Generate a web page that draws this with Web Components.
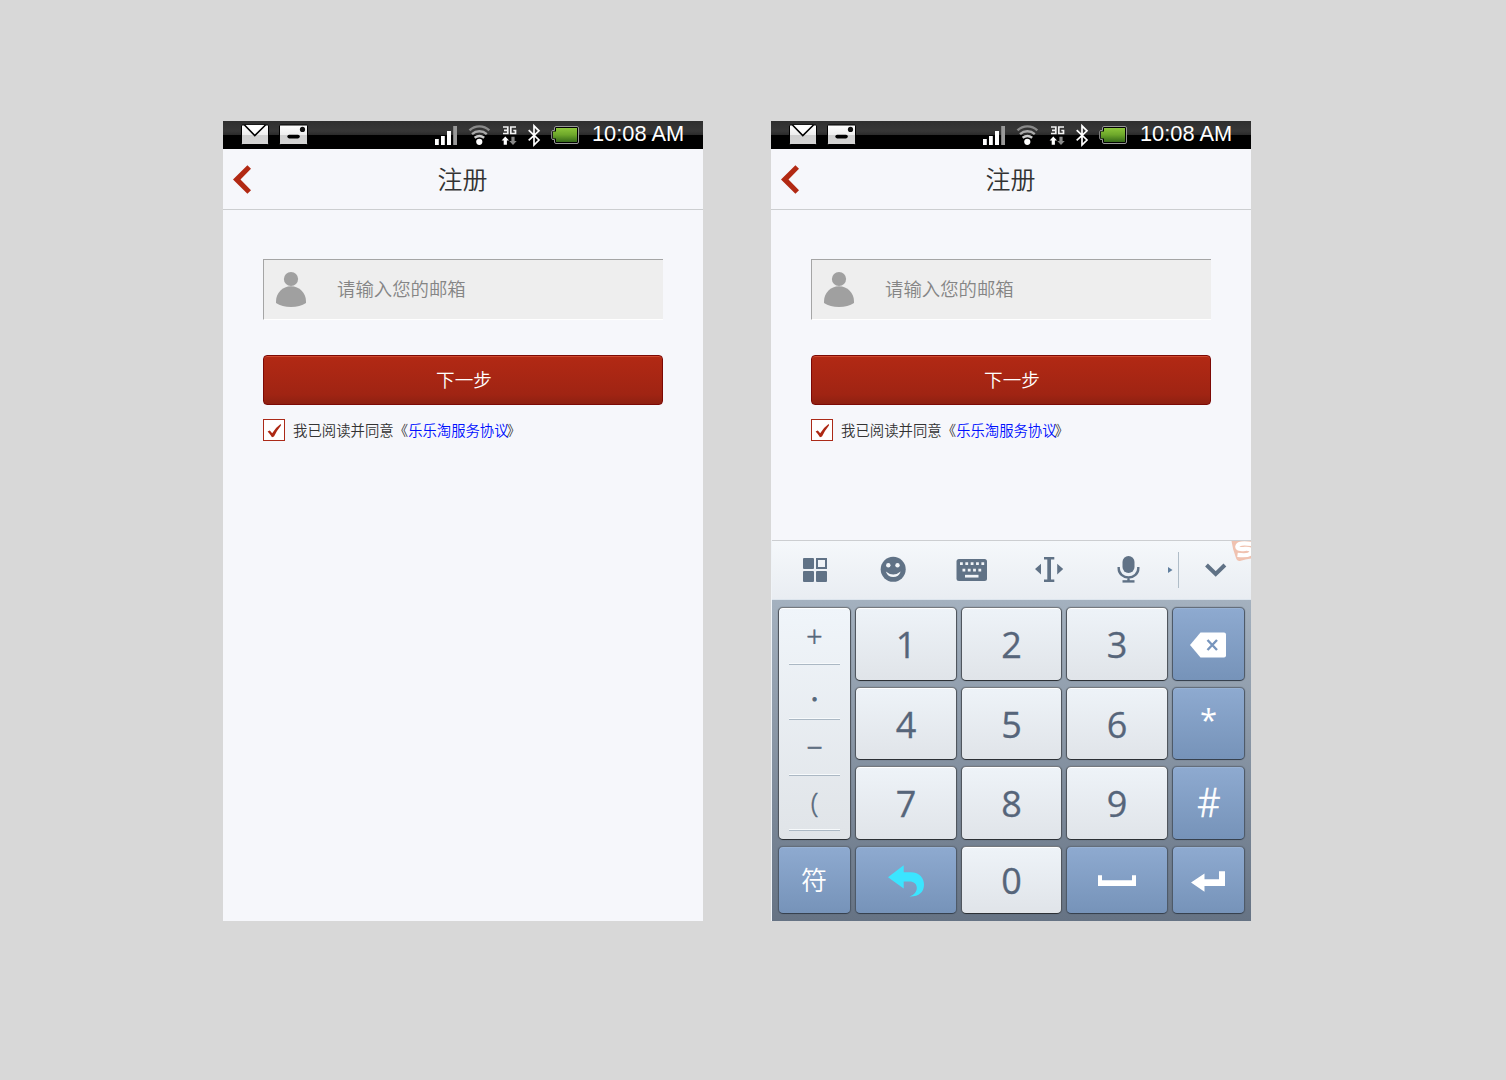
<!DOCTYPE html>
<html lang="zh-CN">
<head>
<meta charset="utf-8">
<title>注册</title>
<style>
html,body{margin:0;height:100%;background:#d8d8d8}
body{font-family:"Liberation Sans","Noto Sans CJK SC",sans-serif;overflow:hidden}
main{display:flex;gap:68px;padding:121px 0 0 223px}
</style>
</head>
<body>
<main>
<phone-screen><register-form></register-form></phone-screen>
<phone-screen><register-form></register-form><soft-keyboard slot="keyboard"></soft-keyboard></phone-screen>
</main>
<script>
const define = (name, html) => customElements.define(name, class extends HTMLElement {
  constructor(){ super(); this.attachShadow({mode:'open'}).innerHTML = html; }
});

define('status-bar', `<style>
:host{display:flex;height:28px;background:linear-gradient(#2f2f2f 0,#373737 10px,#2a2a2a 14px,#000 14px);color:#fff}
svg{display:block;flex:none}
.time{font:21.8px/26px "Liberation Sans",sans-serif;margin-left:6px;white-space:nowrap}
</style>
<svg width="207" height="28" viewBox="0 0 207 28">
<defs><linearGradient id="p" x2="0" y2="1"><stop stop-color="#fff"/><stop offset=".5" stop-color="#eee"/><stop offset=".52" stop-color="#d0d0d0"/><stop offset="1" stop-color="#d4d4d4"/></linearGradient></defs>
<rect x="18.5" y="4" width="27" height="19.5" rx="1" fill="url(#p)" stroke="#000"/><path d="M21.5 4 31.8 14.5 42.5 4" fill="#fff" stroke="#000" stroke-width="1.6"/>
<rect x="56.5" y="4" width="28" height="19.5" rx="1" fill="url(#p)" stroke="#000"/><circle cx="79.5" cy="8.4" r="2.6" fill="#111"/><rect x="64.3" y="13.8" width="12.5" height="3.6" rx="1.8"/>
</svg>
<svg width="156" height="28" viewBox="0 0 156 28">
<defs><linearGradient id="b" x2="0" y2="1"><stop stop-color="#8cc63a"/><stop offset=".48" stop-color="#6ea82b"/><stop offset="1" stop-color="#356a18"/></linearGradient></defs>
<g fill="#fff"><path d="M5 18h3.8v6H5zM11 15h3.8v9H11zM17 10h4v14H17z"/><path d="M23.2 5H27v19h-3.8z" fill="#999"/></g>
<g fill="none" stroke-width="2.4"><path d="M39.5 9.4a14.2 14.2 0 0 1 19.8 0" stroke="#8a8a8a"/><path d="M42 13.1a11.2 11.2 0 0 1 14.8 0" stroke="#aaa"/><path d="M44.6 16.8a8 8 0 0 1 9.6 0" stroke="#ccc"/></g><circle cx="49.3" cy="20.8" r="3.1" fill="#fff"/>
<g fill="none" stroke="#f2f2f2" stroke-width="1.7"><path d="M73 6h4.8v6.5H73M74 9.3h3.8M86 6h-5.2v6.5h4.7V9.5h-2.2"/></g>
<path d="M75.3 15.500l3.700 4h-2.100v4.300h-3.200v-4.300h-2.100z" fill="#fff"/><path d="M83 23.900l3.700-4h-2.100v-4.200h-3.200v4.200h-2.100z" fill="#888"/>
<path d="M98.700 9.200 109 19l-5 5V4.800l5 5-10.300 9.600" fill="none" stroke="#fff" stroke-width="1.700"/>
<path d="M126 5.500h21q1.500 0 1.500 1.500v14q0 1.500-1.500 1.500h-21q-1.500 0-1.500-1.500v-2.500h-1.500q-1.300 0-1.300-1.300v-6.400q0-1.300 1.300-1.300h1.500V7q0-1.500 1.500-1.500z" fill="#000" stroke="#999"/><path d="M126 7h21v14h-21v-3.500h-3v-7h3z" fill="url(#b)"/>
</svg><span class="time">10:08 AM</span>`);

define('nav-header', `<style>
:host{display:grid;grid-template-columns:60px 1fr 60px;height:60px;border-bottom:1px solid #ccced0;align-items:center}
h1{margin:0 1px 0 0;text-align:center;font:350 25px/58px "Noto Sans CJK SC",sans-serif;color:#333;height:60px}
svg{display:block}
</style><svg width="60" height="60"><path d="M24.4 16.2 28 19.8 17.5 30.5 28 41.2l-3.6 3.6L10 30.5z" fill="#b22913"/></svg><h1><slot></slot></h1>`);

define('mail-field', `<style>
:host{display:flex;align-items:center;box-sizing:border-box;height:61px;background:#eee;border:1px solid #a5a5a5;border-right:0;border-bottom-color:#fff;color:#858585;font:350 18.4px/56px "Noto Sans CJK SC",sans-serif}
svg{display:block;flex:none}
span{height:59px}
</style><svg width="73" height="59" viewBox="1 1 73 59"><g fill="#a0a0a0"><circle cx="28" cy="20" r="7.1"/><path d="M13 42.5C13 34 19.5 27.3 28 27.3S43 34 43 42.5v1.5q-6 4-15 4t-15-4z"/></g></svg><span><slot></slot></span>`);

define('primary-button', `<style>
:host{display:block;box-sizing:border-box;height:50px;border:1px solid #7c0905;border-radius:4px;background:linear-gradient(#b22914,#a02413 80%,#8e2011);box-shadow:inset 0 1px #cf4a30;text-align:center;color:#fff;padding-left:2px;font:350 18.6px/46px "Noto Sans CJK SC",sans-serif}
</style><slot></slot>`);

define('agree-row', `<style>
:host{display:flex;gap:8px;height:22px;font:350 14.4px/21px "Noto Sans CJK SC",sans-serif;color:#333;white-space:nowrap}
i{display:block;box-sizing:border-box;width:22px;height:22px;border:1px solid #ab2a18;background:#fff}
svg{display:block}
a{color:#0010ff;letter-spacing:-.05px}
b{font-weight:350;margin-left:-2px;letter-spacing:-1px}
</style><i><svg width="20" height="20"><path d="M3.6 11.5 5.8 10.6 8.2 13.3Q11.8 7.3 16.6 4 17.7 4.7 16.4 6.2 12.2 11.3 10 16.6L8 17.2Q6 14 3.6 11.5z" fill="#ad2813"/></svg></i><span>我已阅读并同意《<a>乐乐淘服务协议</a><b>》</b></span>`);

define('register-form', `<style>
:host{display:block;padding:49px 40px 0}
primary-button{margin:35px 0 14px}
</style><mail-field>请输入您的邮箱</mail-field><primary-button>下一步</primary-button><agree-row></agree-row>`);

define('phone-screen', `<style>
:host{display:flex;flex-direction:column;width:480px;height:800px;background:#f6f7fb;overflow:hidden}
.body{flex:1}
</style><status-bar></status-bar><nav-header>注册</nav-header><div class="body"><slot></slot></div><slot name="keyboard"></slot>`);

define('key-toolbar', `<style>
:host{display:flex;height:58px;padding-left:4px;background:linear-gradient(#f5f8fb,#e9edf2);border-top:1px solid #ccced1;border-bottom:1px solid #dde5ed;overflow:hidden}
svg{display:block;flex:none}
</style>
<svg width="78" height="58" fill="#607286"><rect x="27" y="17" width="11" height="11" rx="1"/><rect x="41" y="18" width="9" height="9" fill="none" stroke="#607286" stroke-width="2"/><rect x="27" y="30" width="11" height="11" rx="1"/><rect x="40" y="30" width="11" height="11" rx="1"/></svg>
<svg width="78" height="58"><circle cx="39.2" cy="28.3" r="12.5" fill="#607286"/><circle cx="34.3" cy="24.2" r="2.2" fill="#f3f6f9"/><circle cx="43.5" cy="24.2" r="2.2" fill="#f3f6f9"/><path d="M31.8 30.4q7.4 6.2 14.9 0-1.9 5.7-7.4 5.7t-7.5-5.7z" fill="#f3f6f9"/></svg>
<svg width="78" height="58"><rect x="24.5" y="18" width="30.5" height="22" rx="2.5" fill="#607286"/><path d="M28 22.7h25" stroke="#f1f4f7" stroke-width="2.8" stroke-dasharray="2.8 2.55"/><path d="M30.5 29.2h20" stroke="#f1f4f7" stroke-width="2.8" stroke-dasharray="2.8 2.5"/><path d="M33 35.2h13.5" stroke="#f1f4f7" stroke-width="2.7"/></svg>
<svg width="78" height="58" fill="#607286"><path d="M34 16h10.3v2.5H41v20h3.3V41H34v-2.5h3.3v-20H34zM31 22.7v10.8L25 28zM47.2 22.7v10.8L53.2 28z"/></svg>
<svg width="78" height="58"><rect x="34.5" y="15" width="12" height="17" rx="6" fill="#607286"/><path d="M30.7 26v1.5a9.8 9 0 0 0 19.6 0V26M40.5 36.5v3.5" fill="none" stroke="#607286" stroke-width="2.4"/><path d="M34.5 39.2h12v2.4h-12z" fill="#607286"/></svg>
<svg width="85" height="58"><path d="M2 26l4.5 3L2 32z" fill="#607f9e"/><path d="M12.5 11v36" stroke="#b0bdc8"/><path d="M40.5 24l9.2 9 9.2-9" fill="none" stroke="#607286" stroke-width="4"/><path d="M65.5 0H86v17.500q-6 .5-12 2.500-3 .3-4-3Q66.500 8 65.500 0z" fill="#f0c2b0"/><path d="M87 3.200Q72 .8 71.300 5.500 71.500 8.800 79 7.800 86 7.300 85.500 11 84 15.500 71.500 13.800" fill="none" stroke="#fff" stroke-width="4.200"/></svg>`);

customElements.define('pad-key', class extends HTMLElement {
  constructor(){ super(); this.attachShadow({mode:'open'}).innerHTML = `<style>
:host{display:flex;align-items:center;justify-content:center;box-sizing:border-box;border:1px solid #65717d;border-color:#75797e #50565e #2c3035;border-radius:5px;background:linear-gradient(#eef3f8,#e0e4e9);box-shadow:0 0 1px #46505b,inset 0 1px #fff;color:#56657a;font:36px/1 "Open Sans","Noto Sans",sans-serif;overflow:hidden}
span{display:block;padding-top:2px;-webkit-text-stroke:.3px}
:host([blue]) span{padding:0;-webkit-text-stroke:0}
:host([blue]){background:linear-gradient(#8eaad0,#7693b9);border-color:#646e7b #4e5a69 #37414e;box-shadow:0 0 1px #46505b,inset 0 1px #98b2d4;color:#fff}
</style><span><slot></slot></span>`; }
});

define('symbol-strip', `<style>
:host{display:flex;flex-direction:column;box-sizing:border-box;border:1px solid #65717d;border-color:#75797e #50565e #2c3035;border-radius:5px;background:linear-gradient(#f0f5fa,#e0e4e8);box-shadow:0 0 1px #46505b,inset 0 1px #fff;padding:0 10px;color:#56677a;font:27px/1 "Open Sans","Noto Sans",sans-serif}
div{display:flex;align-items:center;justify-content:center;box-sizing:border-box;height:55.6px;border-bottom:1px solid #abb8c4;box-shadow:inset 0 -1px #f7fafc}
div:first-child{height:57px}
span{display:block;line-height:30px}
.plus{font-size:28.5px;font-weight:300;-webkit-text-stroke:.6px}
.dot{-webkit-text-stroke:1.2px;padding-bottom:2px}
.paren{font-weight:300;font-size:28px;-webkit-text-stroke:.5px;padding-bottom:2px}
</style><div><span class="plus">+</span></div><div><span class="dot">.</span></div><div><span class="plus">−</span></div><div><span class="paren">(</span></div>`);

define('soft-keyboard', `<style>
:host{display:block;border-left:1px solid #eff3f7;height:381px;box-sizing:border-box}
.pad{display:grid;box-sizing:border-box;height:321px;padding:7px 6px;grid-template-columns:73px 102px 101px 102px 73px;grid-template-rows:74px 73px 74px 68px;gap:6px 4px;background:linear-gradient(#a4b1bf,#667384)}
symbol-strip{grid-row:span 3;padding-top:1px}
svg{display:block}
.star{display:block;font-size:31px;line-height:48px;padding-bottom:10px}
.hash{display:block;font-weight:300;font-size:40px;transform:translateY(-1px) scaleX(.9);-webkit-text-stroke:.7px}
.fu{display:block;font:350 26px/1 "Noto Sans CJK SC",sans-serif;padding:0 1px 2px 0}
</style><key-toolbar></key-toolbar><div class="pad">
<symbol-strip></symbol-strip>
<pad-key>1</pad-key><pad-key>2</pad-key><pad-key>3</pad-key>
<pad-key blue><svg width="71" height="72"><path d="M17 37 27.5 24.5H51q2 0 2 2v21q0 2-2 2H27.5z" fill="#fff"/><path d="M34.5 32l9.5 10M44 32l-9.5 10" stroke="#7795bd" stroke-width="2.4"/></svg></pad-key>
<pad-key>4</pad-key><pad-key>5</pad-key><pad-key>6</pad-key><pad-key blue><span class="star">*</span></pad-key>
<pad-key>7</pad-key><pad-key>8</pad-key><pad-key>9</pad-key><pad-key blue><span class="hash">#</span></pad-key>
<pad-key blue><span class="fu">符</span></pad-key>
<pad-key blue><svg width="100" height="66"><path d="M32 30.3 47.7 18.3v7h7c9 0 13.3 6 13.3 12.5 0 7.5-5.5 12.2-14.5 11.8 5-2.2 7.3-5 7.3-8.7 0-4-3-6.300-7.300-6.300h-5.800v7z" fill="#3be5ff"/></svg></pad-key>
<pad-key>0</pad-key>
<pad-key blue><svg width="100" height="66"><path d="M31 28.300h4v5h30v-5h4V39H31z" fill="#fff"/></svg></pad-key>
<pad-key blue><svg width="71" height="66"><path d="M18 35.500 31.500 26.500v5.700H46v-8h6V39H31.500v5.700z" fill="#fff"/></svg></pad-key>
</div>`);
</script>
</body>
</html>
